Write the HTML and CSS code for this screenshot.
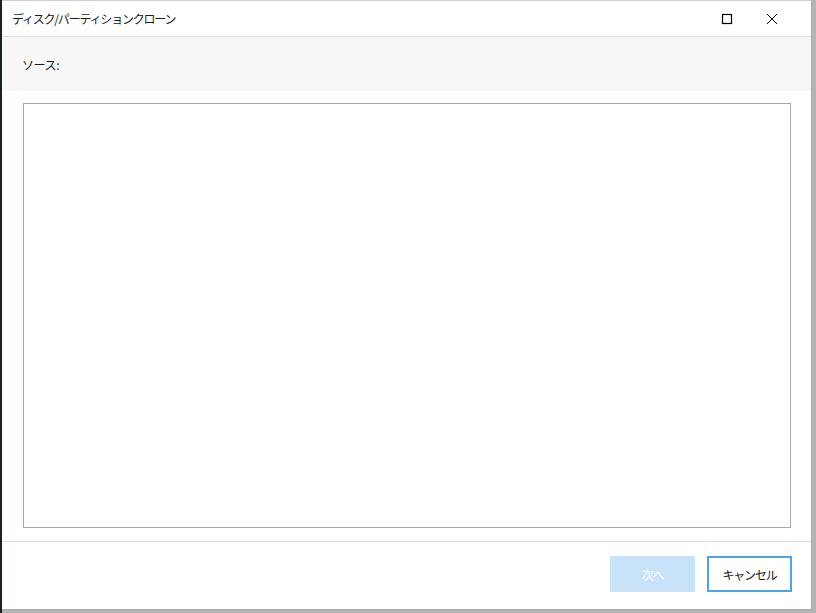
FILE: index.html
```html
<!DOCTYPE html>
<html lang="ja">
<head>
<meta charset="utf-8">
<link rel="stylesheet" href="styles.css">
</head>
<body>
<div class="desk">
  <div class="window">
    <div class="titlebar">
      <div class="title">ディスク/パーティションクローン</div>
      <div class="controls">
        <span class="ctl"><svg width="12" height="12" viewBox="0 0 12 12"><rect x="1.5" y="1.5" width="9" height="9" fill="none" stroke="#000" stroke-width="1.2"/></svg></span>
        <span class="ctl"><svg width="12" height="12" viewBox="0 0 12 12"><path d="M1 1L11 11M11 1L1 11" stroke="#000" stroke-width="1"/></svg></span>
      </div>
    </div>
    <div class="header">ソース:</div>
    <div class="content">
      <div class="listbox"></div>
    </div>
    <div class="footer">
      <button class="btn primary" disabled>次へ</button>
      <button class="btn cancel">キャンセル</button>
    </div>
  </div>
</div>
</body>
</html>
```
FILE: styles.css
```css
html, body {
  margin: 0;
  padding: 0;
  width: 816px;
  height: 613px;
  overflow: hidden;
}
body {
  background: linear-gradient(to right, #1b2226 0, #1b2226 2px, #b4b4b4 2px);
  font-family: "Noto Sans CJK JP", "Noto Sans", sans-serif;
  font-size: 12px;
  color: #1a1a1a;
}
.desk {
  padding-left: 2px;
}
.window {
  width: 809px;
  height: 608px;
  background: #fff;
  border: 1px solid #a9a9a9;
  border-left: none;
  border-top-color: #cfcfcf;
  display: flex;
  flex-direction: column;
}
.titlebar {
  height: 35px;
  border-bottom: 1px solid #dcdcdc;
  display: flex;
  align-items: center;
  justify-content: space-between;
  padding-left: 10px;
}
.title {
  font-size: 12px;
  letter-spacing: -1.2px;
}
.controls {
  display: flex;
  gap: 33px;
  padding-right: 33px;
}
.ctl {
  display: flex;
  width: 12px;
  height: 12px;
}
.header {
  height: 54px;
  background: #f7f7f7;
  display: flex;
  align-items: center;
  padding-left: 20px;
  font-size: 12px;
  letter-spacing: -0.4px;
}
.content {
  flex: 1;
  padding: 12px 20px 13px 21px;
  display: flex;
  border-bottom: 1px solid #e0e0e0;
}
.listbox {
  flex: 1;
  border: 1px solid #a8a8a8;
}
.footer {
  height: 67px;
  display: flex;
  justify-content: flex-end;
  align-items: flex-start;
  gap: 12px;
  padding: 14px 19px 0 0;
  box-sizing: border-box;
}
.btn {
  width: 85px;
  height: 36px;
  font-family: inherit;
  font-size: 12px;
  letter-spacing: -1.2px;
  border: none;
  padding: 0;
  box-sizing: border-box;
}
.primary {
  background: #c7e2f9;
  color: #fff;
}
.cancel {
  background: #fff;
  border: 2px solid #4aa5f0;
  color: #1a1a1a;
}
```
